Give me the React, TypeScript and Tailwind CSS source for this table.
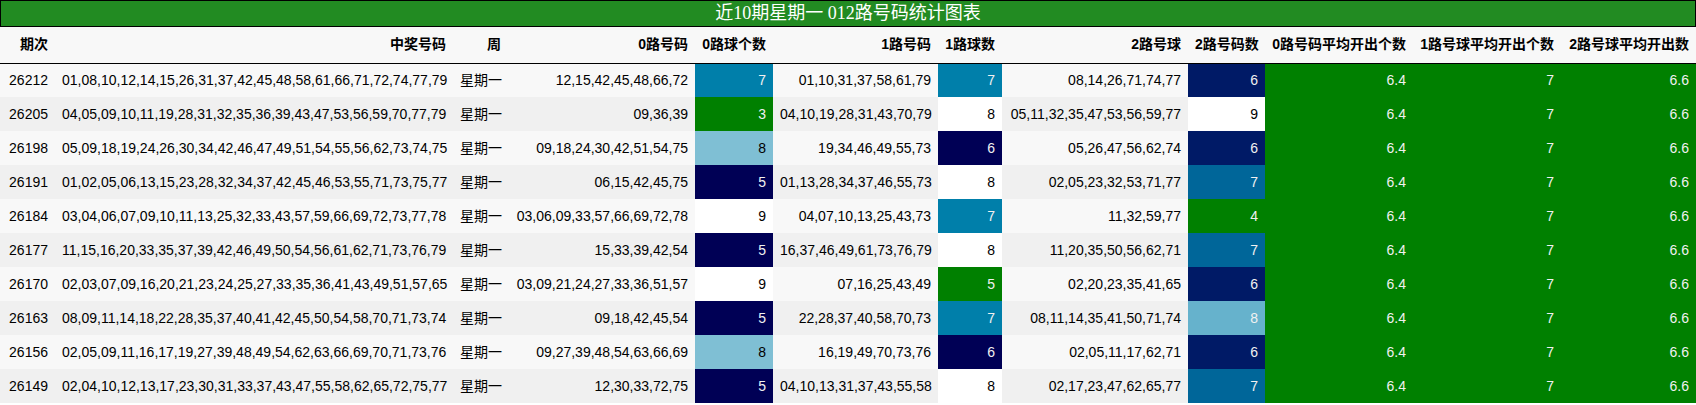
const rows = [
  ['26212', '01,08,10,12,14,15,26,31,37,42,45,48,58,61,66,71,72,74,77,79', '12,15,42,45,48,66,72', 7, '01,10,31,37,58,61,79', 7, '08,14,26,71,74,77', 6],
  ['26205', '04,05,09,10,11,19,28,31,32,35,36,39,43,47,53,56,59,70,77,79', '09,36,39', 3, '04,10,19,28,31,43,70,79', 8, '05,11,32,35,47,53,56,59,77', 9],
  ['26198', '05,09,18,19,24,26,30,34,42,46,47,49,51,54,55,56,62,73,74,75', '09,18,24,30,42,51,54,75', 8, '19,34,46,49,55,73', 6, '05,26,47,56,62,74', 6],
  ['26191', '01,02,05,06,13,15,23,28,32,34,37,42,45,46,53,55,71,73,75,77', '06,15,42,45,75', 5, '01,13,28,34,37,46,55,73', 8, '02,05,23,32,53,71,77', 7],
  ['26184', '03,04,06,07,09,10,11,13,25,32,33,43,57,59,66,69,72,73,77,78', '03,06,09,33,57,66,69,72,78', 9, '04,07,10,13,25,43,73', 7, '11,32,59,77', 4],
  ['26177', '11,15,16,20,33,35,37,39,42,46,49,50,54,56,61,62,71,73,76,79', '15,33,39,42,54', 5, '16,37,46,49,61,73,76,79', 8, '11,20,35,50,56,62,71', 7],
  ['26170', '02,03,07,09,16,20,21,23,24,25,27,33,35,36,41,43,49,51,57,65', '03,09,21,24,27,33,36,51,57', 9, '07,16,25,43,49', 5, '02,20,23,35,41,65', 6],
  ['26163', '08,09,11,14,18,22,28,35,37,40,41,42,45,50,54,58,70,71,73,74', '09,18,42,45,54', 5, '22,28,37,40,58,70,73', 7, '08,11,14,35,41,50,71,74', 8],
  ['26156', '02,05,09,11,16,17,19,27,39,48,49,54,62,63,66,69,70,71,73,76', '09,27,39,48,54,63,66,69', 8, '16,19,49,70,73,76', 6, '02,05,11,17,62,71', 6],
  ['26149', '02,04,10,12,13,17,23,30,31,33,37,43,47,55,58,62,65,72,75,77', '12,30,33,72,75', 5, '04,10,13,31,37,43,55,58', 8, '02,17,23,47,62,65,77', 7],
] as const;

// ocean colormap, normalised per column
const green = 'bg-[#008000] text-[#f1f1f1]';
const white = 'bg-white text-black';
const c0: Record<number, string> = {
  3: green,
  5: 'bg-[#000055] text-[#f1f1f1]',
  7: 'bg-[#007faa] text-[#f1f1f1]',
  8: 'bg-[#7fbfd4] text-black',
  9: white,
};
const c1: Record<number, string> = {
  5: green,
  6: 'bg-[#000055] text-[#f1f1f1]',
  7: 'bg-[#007faa] text-[#f1f1f1]',
  8: white,
};
const c2: Record<number, string> = {
  4: green,
  6: 'bg-[#001a66] text-[#f1f1f1]',
  7: 'bg-[#006699] text-[#f1f1f1]',
  8: 'bg-[#66b2cc] text-[#f1f1f1]',
  9: white,
};

const headers = ['期次', '中奖号码', '周', '0路号码', '0路球个数', '1路号码', '1路球数', '2路号球', '2路号码数', '0路号码平均开出个数', '1路号球平均开出个数', '2路号球平均开出数'];
const widths = [55, 398, 55, 187, 78, 165, 64, 186, 77, 148, 148, 135];

export default function App() {
  return (
    <div className="w-[1696px] h-[405px] bg-white font-['Liberation_Sans','Noto_Sans_CJK_SC',sans-serif] text-[14px] overflow-hidden">
      <div className="h-[27px] border border-black bg-[#228b22] text-white text-[18px] leading-[25px] text-center font-['Liberation_Serif','Noto_Sans_CJK_SC',serif]">
        近10期星期一 012路号码统计图表
      </div>
      <table className="table-fixed border-collapse w-[1696px] whitespace-nowrap">
        <colgroup>
          {widths.map((w, i) => (
            <col key={i} style={{ width: w }} />
          ))}
        </colgroup>
        <thead>
          <tr className="h-[36px] bg-[#f8f8f8] border-b border-black">
            {headers.map((h) => (
              <th key={h} className="px-[7px] text-right font-bold text-black">
                {h}
              </th>
            ))}
          </tr>
        </thead>
        <tbody>
          {rows.map((r, i) => (
            <tr key={r[0]} className={`h-[34px] ${i % 2 === 0 ? 'bg-[#f8f8f8]' : 'bg-[#f0f0f0]'} text-black`}>
              <td className="px-[7px] text-right">{r[0]}</td>
              <td className="px-[7px] text-right">{r[1]}</td>
              <td className="px-[7px] text-right">星期一</td>
              <td className="px-[7px] text-right">{r[2]}</td>
              <td className={`px-[7px] text-right ${c0[r[3]]}`}>{r[3]}</td>
              <td className="px-[7px] text-right">{r[4]}</td>
              <td className={`px-[7px] text-right ${c1[r[5]]}`}>{r[5]}</td>
              <td className="px-[7px] text-right">{r[6]}</td>
              <td className={`px-[7px] text-right ${c2[r[7]]}`}>{r[7]}</td>
              <td className={`px-[7px] text-right ${green}`}>6.4</td>
              <td className={`px-[7px] text-right ${green}`}>7</td>
              <td className={`px-[7px] text-right ${green}`}>6.6</td>
            </tr>
          ))}
        </tbody>
      </table>
    </div>
  );
}
